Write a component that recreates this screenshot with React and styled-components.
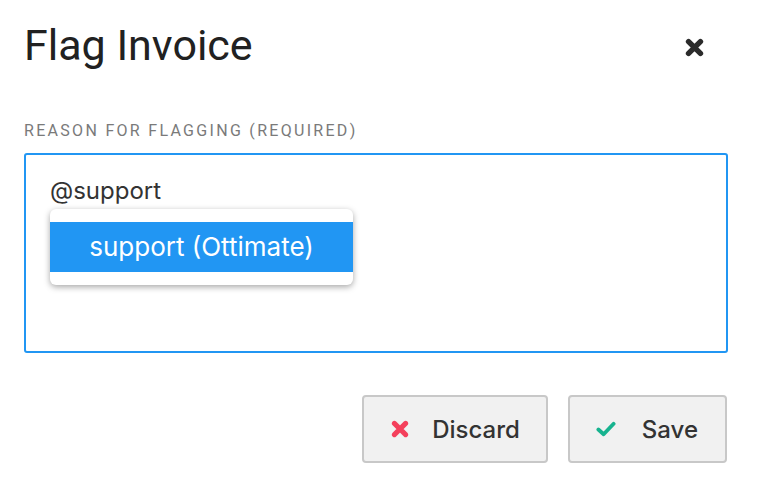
import React from "react";
import styled, { createGlobalStyle } from "styled-components";

const GlobalStyle = createGlobalStyle`
  html, body {
    margin: 0;
    padding: 0;
    background: #fff;
  }
  body {
    font-family: Inter, "Noto Sans", sans-serif;
  }
`;

const Modal = styled.div`
  width: 766px;
  height: 490px;
  box-sizing: border-box;
  padding: 20px 38px 0 24px;
  background: #fff;
`;

const Header = styled.div`
  display: flex;
  align-items: center;
  justify-content: space-between;
`;

const Title = styled.h1`
  margin: 0;
  font-family: Roboto, "Liberation Sans", sans-serif;
  font-weight: 400;
  font-size: 43px;
  line-height: 50px;
  color: #212121;
`;

const CloseButton = styled.button`
  display: flex;
  align-items: center;
  justify-content: center;
  width: 30px;
  height: 30px;
  margin: 4px 19px 0 0;
  padding: 0;
  border: none;
  background: transparent;
  cursor: pointer;
`;

const Label = styled.div`
  margin-top: 51px;
  font-family: Roboto, "Liberation Sans", sans-serif;
  font-size: 16px;
  line-height: 20px;
  letter-spacing: 2.3px;
  text-transform: uppercase;
  color: #7a7a7a;
`;

const MentionBox = styled.div`
  position: relative;
  margin-top: 12px;
  height: 200px;
  box-sizing: border-box;
  border: 2px solid #2196f3;
  border-radius: 3px;
  padding: 21px 24px;
`;

const MentionText = styled.div`
  font-size: 24px;
  line-height: 30px;
  color: #333;
`;

const Suggestions = styled.ul`
  position: absolute;
  top: 54px;
  left: 24px;
  margin: 0;
  padding: 13px 0;
  list-style: none;
  width: 303px;
  background: #fff;
  border-radius: 6px;
  box-shadow: 0 2px 6px rgba(0, 0, 0, 0.35);
`;

const Suggestion = styled.li`
  height: 50px;
  line-height: 50px;
  text-align: center;
  font-size: 26px;
  color: ${(p) => (p.$active ? "#fff" : "#333")};
  background: ${(p) => (p.$active ? "#2196f3" : "transparent")};
`;

const Actions = styled.div`
  display: flex;
  justify-content: flex-end;
  gap: 20px;
  margin-top: 42px;
  margin-right: 1px;
`;

const ActionButton = styled.button`
  display: flex;
  align-items: center;
  gap: ${(p) => p.$gap || 22}px;
  height: 68px;
  padding: 0 ${(p) => p.$padRight || 26}px 0 26px;
  box-sizing: border-box;
  border: 2px solid #c8c8c8;
  border-radius: 4px;
  background: #f1f1f1;
  font-family: Inter, "Noto Sans", sans-serif;
  font-size: 24px;
  font-weight: 500;
  color: #333;
  cursor: pointer;
`;

const IconBox = styled.span`
  display: flex;
  align-items: center;
  justify-content: center;
  width: 20px;
`;

const TimesIcon = ({ color, size, weight = 4 }) => (
  <svg width={size} height={size} viewBox="0 0 16 16">
    <path
      d="M3 3 L13 13 M13 3 L3 13"
      stroke={color}
      strokeWidth={weight}
      strokeLinecap="round"
      fill="none"
    />
  </svg>
);

const CheckIcon = ({ color }) => (
  <svg width="21" height="16" viewBox="0 0 21 16">
    <path
      d="M2.5 8.5 L8 13.5 L18.5 2.5"
      stroke={color}
      strokeWidth="4"
      strokeLinecap="round"
      strokeLinejoin="round"
      fill="none"
    />
  </svg>
);

export default function App() {
  return (
    <>
      <GlobalStyle />
      <Modal>
        <Header>
          <Title>Flag Invoice</Title>
          <CloseButton aria-label="Close">
            <TimesIcon color="#2b2b2b" size={19} weight={4.6} />
          </CloseButton>
        </Header>
        <Label>Reason for flagging (required)</Label>
        <MentionBox>
          <MentionText>@support</MentionText>
          <Suggestions>
            <Suggestion $active>support (Ottimate)</Suggestion>
          </Suggestions>
        </MentionBox>
        <Actions>
          <ActionButton>
            <IconBox>
              <TimesIcon color="#f4405c" size={18} weight={4.4} />
            </IconBox>
            Discard
          </ActionButton>
          <ActionButton $gap={26} $padRight={27}>
            <IconBox>
              <CheckIcon color="#17b38f" />
            </IconBox>
            Save
          </ActionButton>
        </Actions>
      </Modal>
    </>
  );
}
